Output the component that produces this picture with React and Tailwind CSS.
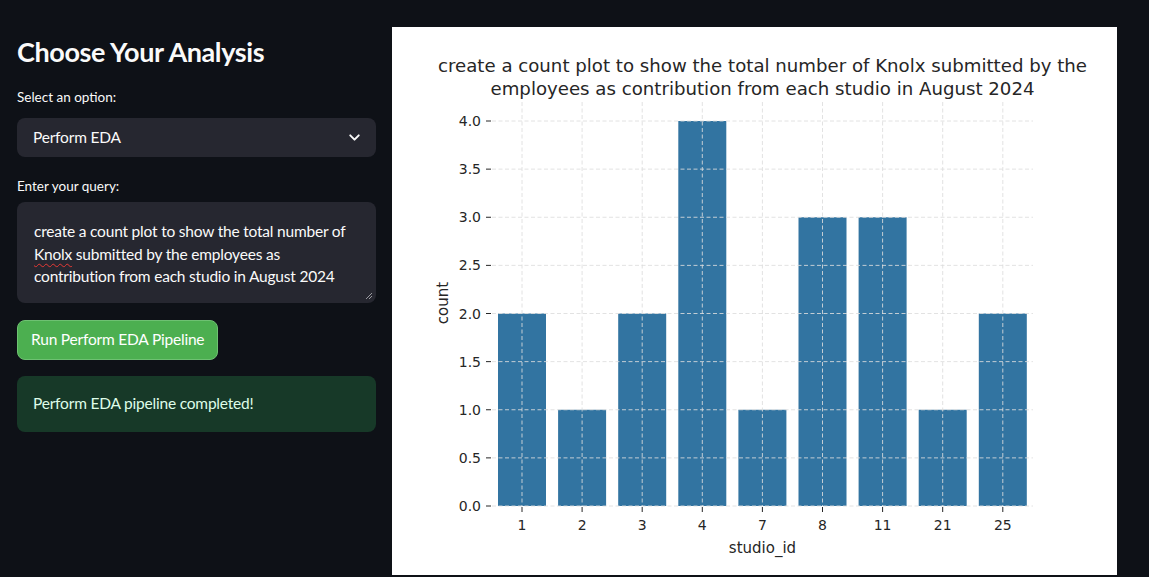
import React from 'react';
import { ChevronDown } from 'lucide-react';

const bars = [
  { id: '1', v: 2 },
  { id: '2', v: 1 },
  { id: '3', v: 2 },
  { id: '4', v: 4 },
  { id: '7', v: 1 },
  { id: '8', v: 3 },
  { id: '11', v: 3 },
  { id: '21', v: 1 },
  { id: '25', v: 2 },
];

// chart geometry (svg coords)
const X0 = 100;
const X1 = 641;
const STEP = 60.1;
const Y0 = 479;
const UNIT = 96.25;
const TOP = 75;
const cx = (i) => 130 + STEP * i;
const cy = (v) => Y0 - UNIT * v;
const yTicks = [0, 0.5, 1, 1.5, 2, 2.5, 3, 3.5, 4];

const CountPlot = () => (
  <svg width="725" height="548" viewBox="0 0 725 548" style={{ fontFamily: '"DejaVu Sans", sans-serif' }}>
    <rect width="725" height="548" fill="#ffffff" />
    {/* title */}
    <text x="370.5" y="45" fontSize="17" textAnchor="middle" fill="#262626" textLength="649" lengthAdjust="spacingAndGlyphs">
      create a count plot to show the total number of Knolx submitted by the
    </text>
    <text x="370.5" y="68" fontSize="17" textAnchor="middle" fill="#262626" textLength="544" lengthAdjust="spacingAndGlyphs">
      employees as contribution from each studio in August 2024
    </text>

    {/* bars */}
    {bars.map((b, i) => (
      <rect key={b.id} x={cx(i) - 24} y={cy(b.v)} width="48" height={UNIT * b.v} fill="#3274a1" />
    ))}

    {/* grid on top */}
    <g stroke="#dddddd" strokeOpacity="0.85" strokeWidth="1" strokeDasharray="4 2.5">
      {yTicks.map((t) => (
        <line key={t} x1={X0} x2={X1} y1={cy(t)} y2={cy(t)} />
      ))}
      {bars.map((b, i) => (
        <line key={b.id} x1={cx(i)} x2={cx(i)} y1={TOP} y2={Y0} />
      ))}
    </g>

    {/* ticks */}
    <g fill="#262626" fontSize="14">
      {yTicks.map((t) => (
        <g key={t}>
          <line x1={X0 - 6} x2={X0 - 1} y1={cy(t)} y2={cy(t)} stroke="#262626" strokeWidth="1" />
          <text x={89} y={cy(t) + 5} textAnchor="end">{t.toFixed(1)}</text>
        </g>
      ))}
      {bars.map((b, i) => (
        <g key={b.id}>
          <line x1={cx(i)} x2={cx(i)} y1={Y0 + 1} y2={Y0 + 6} stroke="#262626" strokeWidth="1" />
          <text x={cx(i)} y={503} textAnchor="middle">{b.id}</text>
        </g>
      ))}
    </g>

    {/* axis labels */}
    <text x="370.5" y="526" fontSize="15" textAnchor="middle" fill="#262626">studio_id</text>
    <text transform="translate(51 276) rotate(-90)" fontSize="15" textAnchor="middle" fill="#262626" dy="0.35em">count</text>
  </svg>
);

export default function App() {
  return (
    <div className="w-full h-[577px] bg-[#0e1117] flex overflow-hidden font-['Lato','Noto_Sans',sans-serif] text-[#fafafa]">
      {/* controls */}
      <div className="w-[359px] ml-[17px] shrink-0 flex flex-col">
        <h2 className="mt-[34px] text-[27px] font-bold leading-[36px] tracking-[-0.4px]">Choose Your Analysis</h2>
        <p className="mt-[17px] text-[13.5px] leading-5">Select an option:</p>
        <div className="mt-[11px] h-[39px] rounded-lg bg-[#262730] flex items-center justify-between pl-4 pr-[13px]">
          <span className="text-[15.5px] tracking-[-0.2px]">Perform EDA</span>
          <ChevronDown size={17} strokeWidth={2.75} />
        </div>
        <p className="mt-[19px] text-[13.5px] leading-5">Enter your query:</p>
        <div className="relative mt-[6px] h-[101px] rounded-lg bg-[#262730] pl-[17px] pt-[18px] text-[15.5px] tracking-[-0.2px] leading-[22.5px]">
          <div>create a count plot to show the total number of</div>
          <div>
            <span className="underline decoration-wavy decoration-[#e53935] decoration-1 underline-offset-[3px]">Knolx</span> submitted by the employees as
          </div>
          <div>contribution from each studio in August 2024</div>
          <svg className="absolute right-[3px] bottom-[3px]" width="8" height="8" viewBox="0 0 8 8">
            <path d="M1 7 L7 1 M4 7 L7 4" stroke="#9a9aa0" strokeWidth="1" />
          </svg>
        </div>
        <div className="mt-[17px]">
          <button className="h-10 px-[13px] rounded-lg bg-[#4caf50] border border-[#6ec172] text-[15.5px] tracking-[-0.2px] text-white">
            Run Perform EDA Pipeline
          </button>
        </div>
        <div className="mt-4 h-14 rounded-lg bg-[#173928] flex items-center px-4 text-[15.5px] tracking-[-0.2px] text-[#dffde9]">
          Perform EDA pipeline completed!
        </div>
      </div>

      {/* chart */}
      <div className="ml-4 mt-[27px] w-[725px] h-[548px] shrink-0 bg-white overflow-hidden">
        <CountPlot />
      </div>
    </div>
  );
}
